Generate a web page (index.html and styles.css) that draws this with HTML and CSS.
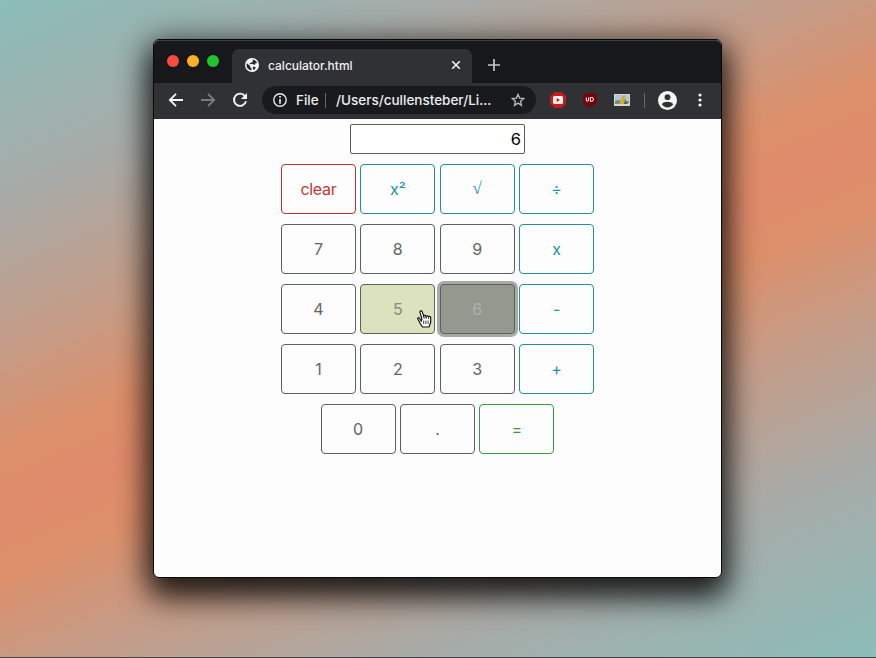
FILE: index.html
```html
<!DOCTYPE html>
<html lang="en">
<head>
<meta charset="utf-8">
<title>calculator.html</title>
<link rel="stylesheet" href="styles.css">
</head>
<body>
<div class="window">
  <header class="tabbar">
    <div class="lights"><i class="red"></i><i class="yellow"></i><i class="green"></i></div>
    <div class="tab">
      <svg class="globe" viewBox="0 0 14 14" width="14" height="14"><circle cx="7" cy="7" r="7" fill="#f7f7f8"/><path d="M2 5.2 5.2 8.1V9.2L6.5 10.2V12.5C3.3 12.2 1.3 9.7 1.5 6.7ZM7.6 1.6C10 1.8 11.6 3.2 12.2 5.2L10.8 5 9.6 6.9 7.6 6 5.3 6.3 4.7 5.1 6.6 4.4 7.8 3.7ZM8.4 8.4 10.8 9.2 9.7 11.5 8.5 11.9 7.6 9.4Z" fill="#292a2d"/></svg>
      <span class="title">calculator.html</span>
      <svg class="close" viewBox="0 0 10 10" width="10" height="10"><path d="M1.2 1.2 8.8 8.8M8.8 1.2 1.2 8.8" stroke="#f1f1f3" stroke-width="1.6"/></svg>
    </div>
    <svg class="plus" viewBox="0 0 12 12" width="12" height="12"><path d="M6 0V12M0 6H12" stroke="#c4c5c9" stroke-width="1.7"/></svg>
  </header>
  <nav class="toolbar">
    <svg class="nav-icon" viewBox="0 0 16 16" width="16" height="16"><path d="M15 8H2M8 1.8 1.8 8 8 14.2" fill="none" stroke="#f4f4f5" stroke-width="1.8"/></svg>
    <svg class="nav-icon" viewBox="0 0 16 16" width="16" height="16"><path d="M1 8H14M8 1.8 14.2 8 8 14.2" fill="none" stroke="#7b7c80" stroke-width="1.8"/></svg>
    <svg class="nav-icon" viewBox="0 0 16 16" width="16" height="16"><path d="M13.2 4.4A6.1 6.1 0 1 0 14 9.3" fill="none" stroke="#f4f4f5" stroke-width="1.9"/><path d="M15 .9V7H8.900Z" fill="#f4f4f5"/></svg>
    <div class="address">
      <svg viewBox="0 0 14 14" width="14" height="14"><circle cx="7" cy="7" r="6.2" fill="none" stroke="#e6e7ea" stroke-width="1.4"/><path d="M7 3.1V4.7M7 6V10.8" stroke="#e6e7ea" stroke-width="1.7"/></svg>
      <span class="scheme">File</span>
      <i class="rule"></i>
      <span class="path">/Users/cullensteber/Li...</span>
      <svg class="star" viewBox="0 0 14 14" width="14" height="14"><path d="M7 1.4 8.6 5.1 12.7 5.5 9.6 8.2 10.5 12.3 7 10.1 3.5 12.3 4.4 8.2 1.3 5.5 5.4 5.1Z" fill="none" stroke="#b9bac0" stroke-width="1.3"/></svg>
    </div>
    <div class="extensions">
      <svg viewBox="0 0 16 16" width="16" height="16"><path d="M4 0H12L13 2 16 4V12L13 14 12 16H4L3 14 0 12V4L3 2Z" fill="#c51c1c"/><rect x="3" y="4" width="10" height="8" rx="1.5" fill="#f8f3ee"/><path d="M6.7 6 10 8 6.7 10Z" fill="#b51b1b"/></svg>
      <svg viewBox="0 0 16 16" width="16" height="16"><path d="M8 .2C10 1.6 12.5 2.3 15 2.4V7C15 11.5 12 14.2 8 15.8 4 14.2 1 11.5 1 7V2.4C3.500 2.300 6 1.600 8 .2Z" fill="#760309"/><path d="M4.300 5.500V8Q4.300 9.300 5.400 9.300T6.500 8V5.500M8.300 5.500V9.300H9.500Q11.500 9.300 11.500 7.400T9.500 5.500Z" fill="none" stroke="#fff" stroke-width="1"/></svg>
      <svg viewBox="0 0 16 12" width="16" height="12"><rect width="16" height="12" fill="#d9d6cd"/><path d="M1 1H15V7H1Z" fill="#a9c9e3"/><path d="M1 7 5 6 10 8 15 7V9L1 10Z" fill="#748958"/><path d="M8 2 11 1.500V7L13 10H8L5 8 7 6Z" fill="#d8ae27"/><path d="M11 5 14 10H10Z" fill="#4e6579"/></svg>
    </div>
    <i class="rule wide"></i>
    <svg class="avatar" viewBox="0 0 19 19" width="19" height="19"><circle cx="9.500" cy="9.500" r="9.500" fill="#f6f6f4"/><circle cx="9.500" cy="6.200" r="2.900" fill="#303135"/><path d="M3.800 13.300C5 11.500 7.300 10.800 9.500 10.800S14 11.500 15.200 13.300C14 15.300 12 16.400 9.500 16.400S5 15.300 3.800 13.300Z" fill="#303135"/></svg>
    <svg class="dots" viewBox="0 0 4 14" width="4" height="14"><g fill="#f4f4f5"><circle cx="2" cy="2" r="1.600"/><circle cx="2" cy="7" r="1.600"/><circle cx="2" cy="12" r="1.600"/></g></svg>
  </nav>
  <main class="page">
    <div class="display">6</div>
    <div class="row"><button class="key danger">clear</button><button class="key info">x²</button><button class="key info root">√</button><button class="key info">÷</button></div>
    <div class="row"><button class="key">7</button><button class="key">8</button><button class="key">9</button><button class="key info">x</button></div>
    <div class="row"><button class="key">4</button><button class="key hovered">5<svg class="pointer" viewBox="0 0 15 18" width="15" height="18"><path d="M4.200 11 2.600 8.500C1.500 6.900.4 8 1 9.300L3.500 14 5.500 17H12L13.700 12.500V7.500C13.500 6 11.700 6.200 11.500 7.500 11.500 5.500 9.500 5.300 9 6.600 8.700 4.800 6.900 5 6.700 6L5.300 1.900C4.800.3 2.700.8 3 2.400L4.900 8.900Z" fill="#fff" stroke="#111" stroke-width="1.200"/><path d="M6.700 10.500V14M8.900 10.500V14M11.100 10.500V14M6.700 6 7.300 8.500M9 6.600 9.400 8.700M11.500 7.500V9" stroke="#111" stroke-width=".8"/></svg></button><button class="key focused">6</button><button class="key info">-</button></div>
    <div class="row"><button class="key">1</button><button class="key">2</button><button class="key">3</button><button class="key info">+</button></div>
    <div class="row"><button class="key">0</button><button class="key">.</button><button class="key success">=</button></div>
  </main>
</div>
</body>
</html>
```
FILE: styles.css
```css
* { box-sizing: border-box; }
body {
  margin: 0;
  height: 658px;
  padding: 39px 154px 0 153px;
  overflow: hidden;
  font-family: Inter, "Liberation Sans", sans-serif;
  border-bottom: 1px solid #45464c;
  background: linear-gradient(157deg, #8bbdb9 0%, #a7aba8 19%, #c39d89 33%, #dc8f6a 44%, #df8b6c 50%, #dc8f6a 56%, #c39d89 67%, #a7aba8 81%, #8bbdb9 100%);
}
svg { display: block; flex: none; }
.window {
  width: 569px;
  height: 539px;
  border: 1px solid #08090a;
  border-radius: 6px;
  background: #fdfdfd;
  box-shadow: 0 16px 30px 3px rgba(0, 0, 0, .75), 0 4px 30px 5px rgba(0, 0, 0, .4);
}
.tabbar {
  height: 43px;
  display: flex;
  align-items: flex-end;
  background: #17181b;
  border-top: 1px solid #3e3f43;
  border-radius: 5px 5px 0 0;
}
.lights { display: flex; gap: 8px; padding: 0 13px 16px; }
.lights i { width: 12px; height: 12px; border-radius: 50%; }
.lights .red { background: #fb4b3e; }
.lights .yellow { background: #fcb124; }
.lights .green { background: #20c52f; }
.tab {
  width: 240px;
  height: 34px;
  display: flex;
  align-items: center;
  padding: 0 11px 2px 13px;
  background: #303135;
  border-radius: 7px 7px 0 0;
}
.title { margin-left: 9px; font-size: 12px; font-weight: 500; color: #f0f0f2; }
.close { margin-left: auto; }
.plus { margin: 0 0 12px 16px; }
.toolbar {
  height: 36px;
  display: flex;
  align-items: center;
  padding: 0 0 2px 14px;
  background: #303135;
}
.nav-icon { margin-right: 16px; }
.address {
  width: 274px;
  height: 28px;
  margin-left: -2px;
  display: flex;
  align-items: center;
  padding: 0 11px;
  border-radius: 14px;
  background: #191a1d;
  color: #ededf0;
  font-size: 13.500px;
  font-weight: 500;
}
.scheme { width: 23px; margin-left: 9px; }
.rule { width: 1px; height: 15px; margin-left: 6px; background: #66676b; }
.path { margin-left: 10px; white-space: nowrap; }
.star { margin-left: auto; }
.extensions { display: flex; align-items: center; gap: 16px; margin-left: 14px; }
.rule.wide { margin-left: 14px; }
.avatar { margin-left: 13px; }
.dots { margin-left: 21px; }
.page { display: flex; flex-direction: column; align-items: center; padding-top: 5px; }
.display {
  width: 175px;
  height: 30px;
  margin-bottom: 10px;
  padding: 0 3px;
  border: 1px solid #5c5c53;
  border-radius: 2px;
  background: #fff;
  font-size: 16.500px;
  line-height: 28px;
  text-align: right;
  color: #000;
}
.row { display: flex; gap: 4.400px; margin-bottom: 10px; }
.key {
  position: relative;
  width: 75px;
  height: 50px;
  padding: 0;
  border: 1px solid #5b615c;
  border-radius: 4px;
  background: transparent;
  color: #616565;
  font: 16px Inter, "Liberation Sans", sans-serif;
}
.danger { border-color: #b93034; color: #c1352f; letter-spacing: -.3px; }
.info { border-color: #248f97; color: #21949d; }
.root { font: italic 17px "Liberation Serif", serif; }
.success { border-color: #369b42; color: #369b42; }
.hovered { background: #dce2bd; color: #858b7f; }
.focused {
  background: #93998f;
  color: #adb2ad;
  box-shadow: 0 0 0 3px #a9aaa8;
}
.pointer { position: absolute; left: 56px; top: 25px; }
```
